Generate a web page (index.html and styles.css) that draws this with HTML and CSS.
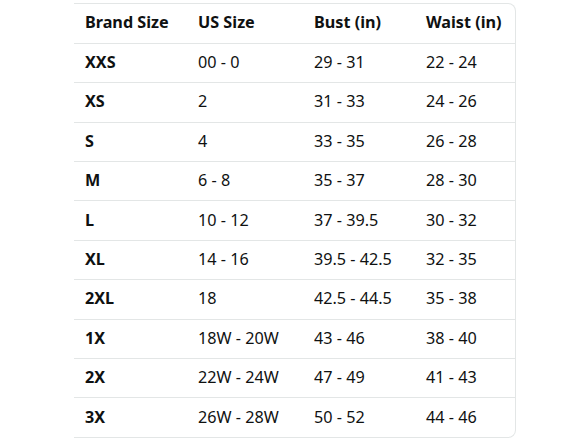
FILE: index.html
```html
<!DOCTYPE html>
<html>
<head>
<meta charset="utf-8">
<link rel="stylesheet" href="styles.css">
</head>
<body>
<div class="wrap">
<table class="size-table">
<thead>
<tr><th class="c1">Brand Size</th><th class="c2">US Size</th><th class="c3">Bust (in)</th><th class="c4">Waist (in)</th></tr>
</thead>
<tbody>
<tr><th>XXS</th><td>00 - 0</td><td>29 - 31</td><td>22 - 24</td></tr>
<tr><th>XS</th><td>2</td><td>31 - 33</td><td>24 - 26</td></tr>
<tr><th>S</th><td>4</td><td>33 - 35</td><td>26 - 28</td></tr>
<tr><th>M</th><td>6 - 8</td><td>35 - 37</td><td>28 - 30</td></tr>
<tr><th>L</th><td>10 - 12</td><td>37 - 39.5</td><td>30 - 32</td></tr>
<tr><th>XL</th><td>14 - 16</td><td>39.5 - 42.5</td><td>32 - 35</td></tr>
<tr><th>2XL</th><td>18</td><td>42.5 - 44.5</td><td>35 - 38</td></tr>
<tr><th>1X</th><td>18W - 20W</td><td>43 - 46</td><td>38 - 40</td></tr>
<tr><th>2X</th><td>22W - 24W</td><td>47 - 49</td><td>41 - 43</td></tr>
<tr><th>3X</th><td>26W - 28W</td><td>50 - 52</td><td>44 - 46</td></tr>
</tbody>
</table>
</div>
</body>
</html>
```
FILE: styles.css
```css
html, body {
  margin: 0;
  padding: 0;
  background: #ffffff;
}
body {
  font-family: "Noto Sans", "Open Sans", "Liberation Sans", sans-serif;
  color: #0f1111;
}
.wrap {
  margin: 3px 0 0 74px;
  width: 441px;
  border: 1px solid #e3e6e6;
  border-left: none;
  border-radius: 0 8px 8px 0;
  overflow: hidden;
}
.size-table {
  border-collapse: collapse;
  width: 100%;
  table-layout: fixed;
}
.size-table th,
.size-table td {
  height: 39.4px;
  padding: 0 0 2px 11px;
  text-align: left;
  vertical-align: middle;
  font-size: 16.2px;
  line-height: 20px;
  border-bottom: 1px solid #e3e6e6;
  box-sizing: border-box;
  white-space: nowrap;
}
.size-table th {
  font-weight: 700;
}
.size-table td {
  font-weight: 400;
}
.size-table tbody tr:last-child th,
.size-table tbody tr:last-child td {
  border-bottom: none;
}
.c1 { width: 113px; }
.c2 { width: 116px; }
.c3 { width: 112px; }
.c4 { width: 100px; }
```
